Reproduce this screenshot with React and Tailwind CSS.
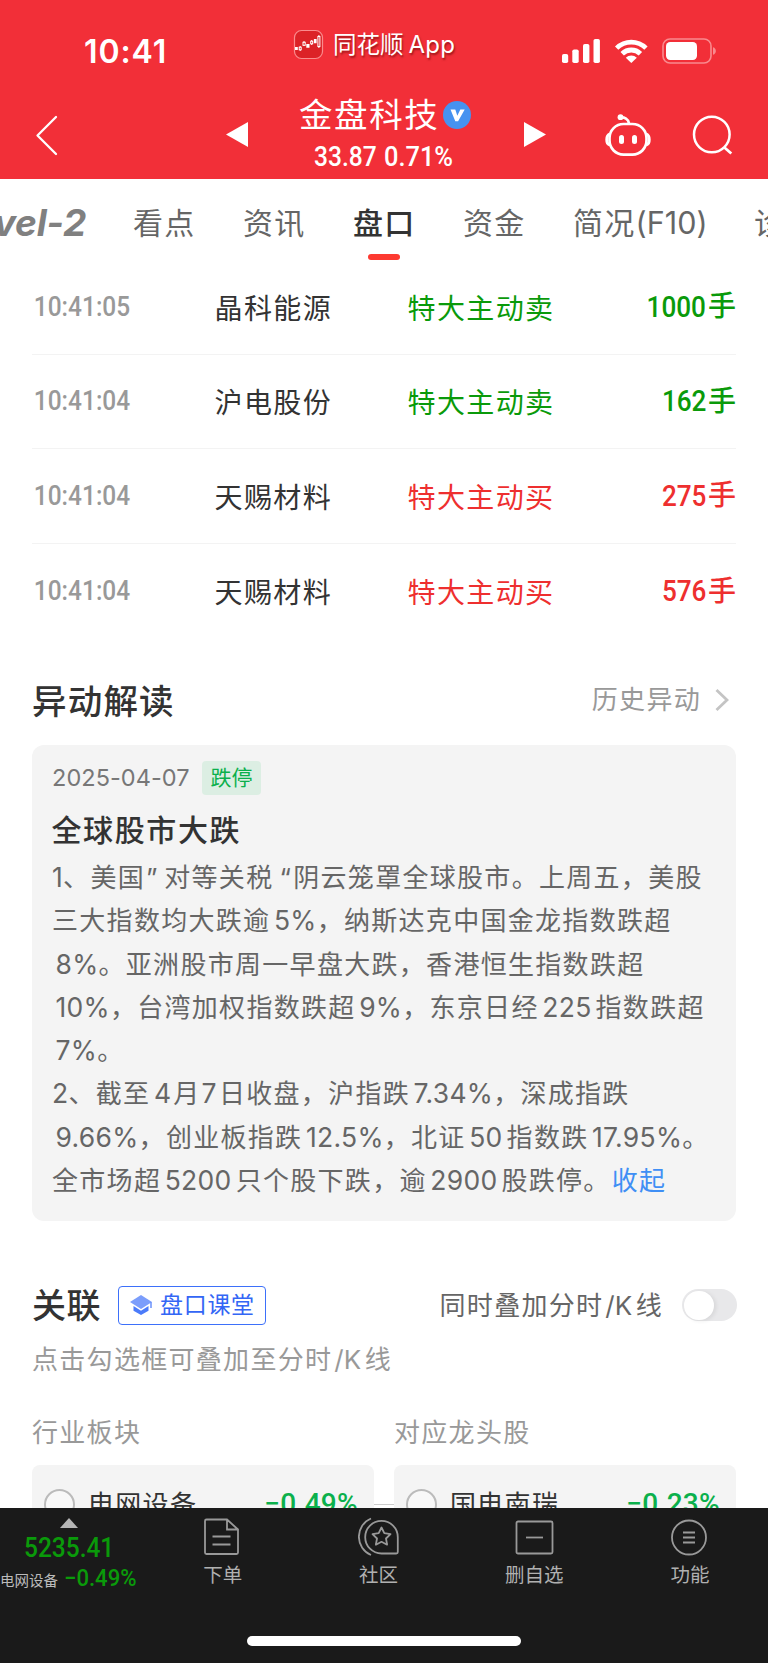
import React from "react";

const SANS = "font-['Inter','Noto_Sans_CJK_SC',sans-serif]";
const DIN = "font-['Roboto','Noto_Sans_CJK_SC',sans-serif]";

function StatusBar() {
  return (
    <div className="flex h-[80px] items-start">
      <div className="ml-[84px] mt-[32px] w-[209px] text-[32px] font-semibold leading-[40px] tracking-[0.9px]">10:41</div>
      <svg className="mt-[29px] h-[31px] w-[31px] shrink-0" viewBox="0 0 31 31">
        <rect x="1.5" y="1.5" width="28" height="28" rx="7" fill="#dc2227" stroke="#fa8b8d" strokeWidth="1.2" />
        <g stroke="#fff" strokeWidth="1" fill="#dc2227">
          <path d="M7.2 17v5M11 12v5M18.7 11v5M25.900 6v13" />
          <rect x="6.2" y="18.200" width="2" height="2.6" />
          <rect x="10" y="13.300" width="2.2" height="3" />
          <rect x="17.700" y="12.2" width="2" height="2.6" />
          <rect x="24.900" y="7.5" width="2" height="10" />
        </g>
        <path d="M2 18h2.800v3H2zM13.300 15h3.200v3.800h-3.200zM20.900 10h2.700v4.300h-2.700z" fill="#fff" />
      </svg>
      <div className="ml-[9px] mt-[30px] w-[229px] whitespace-nowrap text-[23.5px] leading-[30px] [text-shadow:1px_2px_2px_rgba(90,0,0,.55)]">
        同花顺<span className="ml-[5px] text-[24px] tracking-[0.3px]">App</span>
      </div>
      <svg className="mt-[38px] h-[26px] w-[156px] shrink-0" viewBox="562 38 156 26" fill="#fff">
        <rect x="562" y="54" width="6.2" height="9" rx="1.8" />
        <rect x="572.3" y="49.5" width="6.4" height="13.5" rx="1.8" />
        <rect x="583" y="44" width="6.4" height="19" rx="1.8" />
        <rect x="593.5" y="39" width="6.4" height="24" rx="1.8" />
        <path d="M615 46.4a23.5 23.5 0 0 1 32.600 0l-3.300 3.400a18.500 18.500 0 0 0-26 0z" />
        <path d="M620.500 52a15.500 15.500 0 0 1 21.600 0l-3.400 3.400a10.800 10.800 0 0 0-14.800 0z" />
        <path d="M625.800 57.800a8 8 0 0 1 11 0l-5.500 5.300z" />
        <rect x="663" y="39" width="48" height="24" rx="7" fill="none" stroke="#f98a8e" strokeWidth="1.600" />
        <rect x="666" y="42" width="31" height="18" rx="4.200" />
        <path d="M713 47.200c3.800 1.200 3.800 6.400 0 7.600z" fill="#f98a8e" />
      </svg>
    </div>
  );
}

function TitleBar() {
  return (
    <div className="flex h-[99px] items-start">
      <svg className="ml-[34px] mt-[34px] h-[42px] w-[26px] shrink-0" viewBox="34 114 26 42" fill="none" stroke="#fff" strokeWidth="2.300" strokeLinecap="round" strokeLinejoin="round">
        <path d="M56 117L37.500 135.500L56 154" />
      </svg>
      <svg className="ml-[166px] mt-[42px] h-[25px] w-[22px] shrink-0" viewBox="0 0 22 25" fill="#fff"><path d="M22 0v25L0 12.500z" /></svg>
      <div className="ml-[51px] w-[172px]">
        <div className="mt-[14px] flex h-[42px] items-center whitespace-nowrap text-[33.500px] leading-[42px] tracking-[1.600px]">
          金盘科技
          <svg className="ml-[4px] h-[28px] w-[28px] shrink-0" viewBox="0 0 28 28">
            <circle cx="14" cy="14" r="14" fill="#4692f0" />
            <path d="M7.500 8.600h4.800l2 6.200 3-6.200h4.400l-6.600 11.600h-2.800z" fill="#fff" />
          </svg>
        </div>
        <div className={DIN + " ml-[15px] mt-[6px] flex h-[30px] whitespace-nowrap text-[27px] font-medium leading-[30px]"}>
          <span className="w-[70px] origin-left scale-x-[0.91]">33.87</span>
          <span className="origin-left scale-x-[0.94]">0.71%</span>
        </div>
      </div>
      <svg className="ml-[53px] mt-[42px] h-[25px] w-[22px] shrink-0" viewBox="0 0 22 25" fill="#fff"><path d="M0 0v25L22 12.500z" /></svg>
      <svg className="ml-[58px] mt-[33px] h-[44px] w-[48px] shrink-0" viewBox="604 113 48 44" fill="none" stroke="#fff" strokeWidth="2.700">
        <rect x="609.500" y="124" width="37" height="30.600" rx="14" />
        <path d="M609.500 134c-3.600 1.500-4 9.500 0 11M646.500 134c3.600 1.500 4 9.500 0 11" />
        <path d="M620 117.500c4.500-.500 8.500 1.500 9 6" />
        <circle cx="620.500" cy="117.200" r="2.900" fill="#fff" stroke="none" />
        <rect x="619" y="135" width="5" height="9" rx="2.500" fill="#fff" stroke="none" />
        <rect x="632" y="135" width="5" height="9" rx="2.500" fill="#fff" stroke="none" />
      </svg>
      <svg className="ml-[40px] mt-[34px] h-[42px] w-[42px] shrink-0" viewBox="692 114 42 42" fill="none" stroke="#fff" strokeWidth="2.500">
        <circle cx="711.800" cy="134.500" r="17.800" />
        <path d="M723.800 147l7.500 6.500" strokeWidth="2.800" />
      </svg>
    </div>
  );
}

function Tabs() {
  return (
    <div className="flex h-[81px] overflow-hidden whitespace-nowrap text-[30px] leading-[44px] tracking-[1.200px] text-[#666]">
      <div className="mt-[22px] flex w-[86px] shrink-0 justify-end text-[37px] font-bold italic tracking-[-0.200px] text-[#808080]">Level-2</div>
      <div className="ml-[47px] mt-[22px] w-[110px] shrink-0">看点</div>
      <div className="mt-[22px] w-[110px] shrink-0">资讯</div>
      <div className="w-[110px] shrink-0 pt-[22px] font-medium text-[#333]">
        盘口
        <div className="ml-[15px] mt-[9px] h-[6px] w-[32px] rounded-full bg-[#fd3a31]" />
      </div>
      <div className="mt-[22px] w-[110px] shrink-0">资金</div>
      <div className="mt-[22px] w-[181px] shrink-0">简况<span className="text-[30.500px] tracking-[0.100px]">(F10)</span></div>
      <div className="mt-[22px] shrink-0">诊股</div>
    </div>
  );
}

const TRADES = [
  ["10:41:05", "晶科能源", "特大主动卖", "1000", false],
  ["10:41:04", "沪电股份", "特大主动卖", "162", false],
  ["10:41:04", "天赐材料", "特大主动买", "275", true],
  ["10:41:04", "天赐材料", "特大主动买", "576", true],
];

function Trades() {
  return (
    <div className="mx-[32px] h-[378px] whitespace-nowrap">
      {TRADES.map(([time, name, kind, vol, buy], i) => (
        <div key={i} className={"flex h-[94.600px] items-center pt-[4px] text-[28px] tracking-[1.400px] text-[#333] " + (i < 3 ? "border-b border-[#f3f3f3]" : "")}>
          <div className={DIN + " w-[183px] origin-left scale-x-[0.89] pb-[5px] pl-[2px] text-[27.500px] font-medium tracking-normal text-[#999]"}>{time}</div>
          <div className="ml-[-0.500px] w-[193px]">{name}</div>
          <div className={buy ? "text-[#ee2f2f]" : "text-[#0a9a0a]"}>{kind}</div>
          <div className={DIN + " ml-auto flex items-center pb-[3px] text-[29px] font-medium tracking-normal " + (buy ? "text-[#ee2f2f]" : "text-[#0a9a0a]")}>
            <span className="origin-right scale-x-[0.9]">{vol}</span>
            <span className="ml-[2px] text-[28px]">手</span>
          </div>
        </div>
      ))}
    </div>
  );
}

const LINES = [
  ["1、美国”对等关税“阴云笼罩全球股市。上周五，美股", true],
  ["三大指数均大跌逾5%，纳斯达克中国金龙指数跌超", false],
  ["8%。亚洲股市周一早盘大跌，香港恒生指数跌超", false],
  ["10%，台湾加权指数跌超9%，东京日经225指数跌超", false],
  ["7%。", false],
  ["2、截至4月7日收盘，沪指跌7.34%，深成指跌", true],
  ["9.66%，创业板指跌12.5%，北证50指数跌17.95%。", false],
  ["全市场超5200只个股下跌，逾2900股跌停。", false],
];

// Splits a line into CJK and Latin runs and puts a thin gap between them.
function Line({ text, start }) {
  const runs = text.match(/[0-9.%]+|[”“]|[^0-9.%”“]+/g);
  return runs.map((run, i) => {
    if (/^[”“]$/.test(run)) {
      return <span key={i} className={run === "”" ? "ml-[1px] mr-[5.500px]" : "ml-[6px] mr-[1px]"}>{run}</span>;
    }
    if (!/^[0-9]/.test(run)) return <React.Fragment key={i}>{run}</React.Fragment>;
    const prev = runs[i - 1] || "";
    const next = runs[i + 1] || "";
    const left = prev === "月" ? "ml-[1px] " : i > 0 || !start ? "ml-[3.500px] " : "";
    const right = !next || /^[、，。]/.test(next) ? "" : /^[月日]/.test(next) ? "mr-[2px]" : "mr-[4px]";
    return (
      <span key={i} className={"text-[26.500px] tracking-[0.300px] " + left + right}>{run}</span>
    );
  });
}

function Insight() {
  return (
    <section className="px-[32px]">
      <div className="flex h-[107px] items-start justify-between whitespace-nowrap">
        <h2 className="mt-[42px] text-[34.500px] font-medium leading-[44px] tracking-[1.200px] text-[#333]">异动解读</h2>
        <div className="mt-[40px] flex items-center pr-[7px] text-[26px] leading-[44px] tracking-[1.300px] text-[#999]">
          历史异动
          <svg className="ml-[14px] h-[24px] w-[14px]" viewBox="0 0 14 24" fill="none" stroke="#c4c4c4" strokeWidth="2.800"><path d="M1.500 2L12 12L1.500 22" /></svg>
        </div>
      </div>
      <div className="h-[475.500px] rounded-[12px] bg-[#f4f4f4] pl-[20px] pt-[16px]">
        <div className="flex h-[34px] items-center">
          <div className="w-[150px] whitespace-nowrap text-[23.500px] tracking-[0.050px] text-[#777]">2025-04-07</div>
          <div className="flex h-[34px] w-[59px] items-center justify-center rounded-[4px] bg-[#dceee3] text-[21px] text-[#0bb04c]">跌停</div>
        </div>
        <h3 className="ml-[-0.500px] mt-[13px] h-[44px] text-[30px] font-medium leading-[44px] tracking-[1.600px] text-[#333]">全球股市大跌</h3>
        <div className="mt-[4px] whitespace-nowrap text-[26px] leading-[43.250px] tracking-[1.300px] text-[#666]">
          {LINES.map(([text, start], i) => (
            <div key={i} className="h-[43.250px]">
              <Line text={text} start={start} />
              {i === LINES.length - 1 && <span className="ml-[1px] text-[#3f8ff5]">收起</span>}
            </div>
          ))}
        </div>
      </div>
    </section>
  );
}

function StockCard({ label, name, change }) {
  return (
    <div className="w-[342px]">
      <div className="h-[57px] whitespace-nowrap pt-[1px] text-[26px] leading-[44px] tracking-[1.300px] text-[#999]">{label}</div>
      <div className="mt-[-2px] flex h-[78px] items-center rounded-[8px] bg-[#f4f4f4] px-[12px]">
        <div className="h-[31px] w-[31px] rounded-full border-2 border-[#bbb] bg-[#f8f8f8]" />
        <div className="ml-[13px] text-[26px] tracking-[1.300px] text-[#333]">{name}</div>
        <div className={DIN + " ml-auto pr-[4px] text-[28px] font-medium tracking-[0.300px] text-[#0bb04c]"}>{change}</div>
      </div>
    </div>
  );
}

function Related() {
  return (
    <section className="px-[32px] pt-[62.500px]">
      <div className="flex h-[44px] items-center whitespace-nowrap">
        <h2 className="w-[86px] text-[34px] font-medium tracking-[0.500px] text-[#333]">关联</h2>
        <div className="flex h-[39px] w-[148px] items-center rounded-[4px] border-[1.500px] border-[#3d70fa] text-[23px] tracking-[0.700px] text-[#3366f5]">
          <svg className="ml-[11px] mr-[8px] h-[20px] w-[22px]" viewBox="0 0 22 20">
            <path d="M11 0L22 7L11 14L0 7z" fill="#7b9dfb" />
            <path d="M3.500 11L11 15.800L18.500 11v4.800L11 20l-7.500-4.200z" fill="#4b7bfa" />
            <path d="M21 7v6" stroke="#6a90fb" strokeWidth="1.500" />
          </svg>
          盘口课堂
        </div>
        <div className="ml-auto mr-[-1px] flex items-center text-[26px] tracking-[1.300px] text-[#666]">
          <span className="pt-[1px]">同时叠加分时<span className="ml-[2px] mr-[3.500px] tracking-normal">/K</span>线</span>
          <div className="ml-[19px] h-[32px] w-[55px] rounded-full bg-[#e8e8ea] p-[1.500px]">
            <div className="h-[29px] w-[30px] rounded-full bg-white shadow-[2px_1px_4px_rgba(0,0,0,.08)]" />
          </div>
        </div>
      </div>
      <div className="mt-[11px] h-[44px] whitespace-nowrap text-[26px] leading-[44px] tracking-[1.300px] text-[#999]">
        点击勾选框可叠加至分时<span className="ml-[2px] mr-[3.500px] tracking-normal">/K</span>线
      </div>
      <div className="mt-[28px] flex">
        <StockCard label="行业板块" name="电网设备" change="−0.49%" />
        <div className="mt-[94px] h-[1px] w-[20px] bg-[#ccc]" />
        <StockCard label="对应龙头股" name="国电南瑞" change="−0.23%" />
      </div>
    </section>
  );
}

function NavItem({ label, children }) {
  return (
    <div className="flex w-[156px] flex-col items-center text-[19.500px] leading-[28px] text-[#b0b0b0]">
      <svg className="mt-[8px] h-[42px] w-[42px]" viewBox="0 0 42 42" fill="none" stroke="#999" strokeWidth="1.800">{children}</svg>
      <div className="mt-[3px]">{label}</div>
    </div>
  );
}

function BottomNav() {
  return (
    <div className="h-[155px] shrink-0 bg-[#1a1a1a]">
      <div className="flex h-[128px] whitespace-nowrap">
        <div className="w-[145px]">
          <svg className="ml-[60px] mt-[10px] h-[10px] w-[18px]" viewBox="0 0 18 10"><path d="M0 10L9 0l9 10z" fill="#b5b5b5" /></svg>
          <div className={DIN + " ml-[24px] mt-[5px] w-[110px] origin-left scale-x-[0.89] text-[27.500px] font-medium leading-[30px] text-[#0a9a0a]"}>5235.41</div>
          <div className="flex h-[30px] items-center">
            <span className="w-[64px] pt-[5px] text-[14.500px] text-[#bbb]">电网设备</span>
            <span className={DIN + " origin-left scale-x-[0.92] text-[24px] font-medium text-[#0a9a0a]"}>−0.49%</span>
          </div>
        </div>
        <NavItem label="下单">
          <path d="M25 3.500H4.500a1.500 1.500 0 0 0-1.500 1.500v31.500A1.500 1.500 0 0 0 4.500 38h30a1.500 1.500 0 0 0 1.500-1.500V13.500zM25 3.500v10h11M10.500 20.500h18M10.500 28.500h18" />
        </NavItem>
        <NavItem label="社区">
          <path d="M13 2.500a19.800 19.800 0 0 0 0 36.500M23.500 37.500a16.300 16.300 0 1 1 16.300-16.300V36a1.500 1.500 0 0 1-1.500 1.500z" />
          <path d="M23.500 11.500l2.800 5.700 6.200.900-4.500 4.400 1.100 6.200-5.600-2.900-5.600 2.900 1.100-6.200-4.500-4.400 6.200-.900z" strokeLinejoin="round" />
        </NavItem>
        <NavItem label="删自选">
          <rect x="3.500" y="5.500" width="36" height="32" rx="1.500" />
          <path d="M13 21.500h17" />
        </NavItem>
        <NavItem label="功能">
          <circle cx="20" cy="21.500" r="17" />
          <path d="M14 16.500h12M14 21.500h12M14 26.500h12" />
        </NavItem>
      </div>
      <div className="mx-auto h-[10px] w-[274px] rounded-full bg-white" />
    </div>
  );
}

export default function App() {
  return (
    <div className={SANS + " flex h-[1663px] w-[768px] flex-col overflow-hidden bg-white"}>
      <header className="h-[179px] shrink-0 bg-[#f22f38] text-white">
        <StatusBar />
        <TitleBar />
      </header>
      <main className="h-[1329px] shrink-0 overflow-hidden">
        <Tabs />
        <Trades />
        <Insight />
        <Related />
      </main>
      <BottomNav />
    </div>
  );
}
